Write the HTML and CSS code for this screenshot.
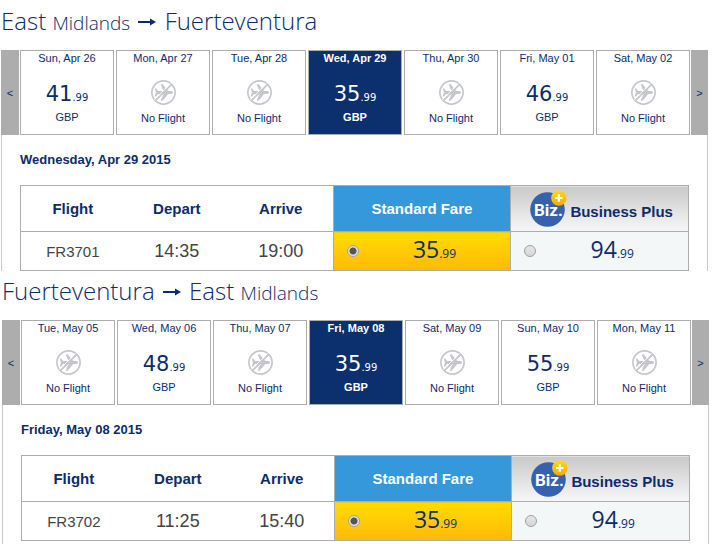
FILE: index.html
```html
<!DOCTYPE html>
<html lang="en">
<head>
  <meta charset="UTF-8" />
  <title>Select flights</title>
  <link rel="stylesheet" href="styles.css">
</head>
<body>
  <svg class="defs" aria-hidden="true">
    <symbol id="no-flight" viewBox="0 0 25 25">
      <circle cx="12.5" cy="12.5" r="11.6" fill="none" stroke="#c6c7ce" stroke-width="1.7"/>
      <path d="M3.800 8.500h1.400l2 2.500h5.300L9.600 4.300h2l5.600 6.700h2.600q2.400.2 2.400 1.500t-2.400 1.500h-2.600l-5.600 6.700h-2L12.500 14H7.200l-2 2.500H3.800l1.100-4z" fill="#c6c7ce"/>
      <path d="M19.800 3.400L3.400 19.800" stroke="#fff" stroke-width="1"/>
      <path d="M20.700 4.300L4.300 20.700" stroke="#c6c7ce" stroke-width="1.700"/>
    </symbol>
    <symbol id="arrow" viewBox="0 0 20 10">
      <path d="M1 5h14" stroke="#0c2c6b" stroke-width="2"/>
      <path d="M13 1.500L19 5l-6 3.500z" fill="#0c2c6b"/>
    </symbol>
    <linearGradient id="gold" x1="0" y1="0" x2="0" y2="1">
      <stop offset="0" stop-color="#ffd91a"/>
      <stop offset="1" stop-color="#f5ab00"/>
    </linearGradient>
  </svg>

  <section class="journey">
    <h2 class="route">East <small>Midlands</small> <svg class="arrow"><use href="#arrow"/></svg> Fuerteventura</h2>
    <div class="days">
      <button class="nav prev">&lt;</button>
      <div class="day-list">
        <button class="day"><span class="date">Sun, Apr 26</span><span class="price">41<small>.99</small></span><span>GBP</span></button>
        <button class="day"><span class="date">Mon, Apr 27</span><svg class="none"><use href="#no-flight"/></svg><span>No Flight</span></button>
        <button class="day"><span class="date">Tue, Apr 28</span><svg class="none"><use href="#no-flight"/></svg><span>No Flight</span></button>
        <button class="day selected"><span class="date">Wed, Apr 29</span><span class="price">35<small>.99</small></span><span>GBP</span></button>
        <button class="day"><span class="date">Thu, Apr 30</span><svg class="none"><use href="#no-flight"/></svg><span>No Flight</span></button>
        <button class="day"><span class="date">Fri, May 01</span><span class="price">46<small>.99</small></span><span>GBP</span></button>
        <button class="day"><span class="date">Sat, May 02</span><svg class="none"><use href="#no-flight"/></svg><span>No Flight</span></button>
      </div>
      <button class="nav next">&gt;</button>
    </div>
    <div class="panel">
      <h3>Wednesday, Apr 29 2015</h3>
      <table class="flights">
        <thead>
          <tr>
            <th>Flight</th>
            <th>Depart</th>
            <th>Arrive</th>
            <th class="fare standard">Standard Fare</th>
            <th class="fare business">
              <div class="plus">
                <svg class="biz" viewBox="0 0 37 37">
                  <circle cx="17.5" cy="19.5" r="17.300" fill="#3561ad"/>
                  <text x="4" y="26" class="biz-text">Biz.</text>
                  <circle cx="28.800" cy="8" r="7.700" fill="url(#gold)"/>
                  <path d="M28.800 4.300v7.400M25.100 8h7.400" stroke="#fff" stroke-width="2.200"/>
                </svg>
                <span>Business Plus</span>
              </div>
            </th>
          </tr>
        </thead>
        <tbody>
          <tr>
            <td class="number">FR3701</td>
            <td>14:35</td>
            <td>19:00</td>
            <td class="standard"><label><input type="radio" name="out" checked><span class="amount">35<small>.99</small></span></label></td>
            <td class="business"><label><input type="radio" name="out"><span class="amount">94<small>.99</small></span></label></td>
          </tr>
        </tbody>
      </table>
    </div>
  </section>

  <section class="journey return">
    <h2 class="route">Fuerteventura <svg class="arrow"><use href="#arrow"/></svg> East <small>Midlands</small></h2>
    <div class="days">
      <button class="nav prev">&lt;</button>
      <div class="day-list">
        <button class="day"><span class="date">Tue, May 05</span><svg class="none"><use href="#no-flight"/></svg><span>No Flight</span></button>
        <button class="day"><span class="date">Wed, May 06</span><span class="price">48<small>.99</small></span><span>GBP</span></button>
        <button class="day"><span class="date">Thu, May 07</span><svg class="none"><use href="#no-flight"/></svg><span>No Flight</span></button>
        <button class="day selected"><span class="date">Fri, May 08</span><span class="price">35<small>.99</small></span><span>GBP</span></button>
        <button class="day"><span class="date">Sat, May 09</span><svg class="none"><use href="#no-flight"/></svg><span>No Flight</span></button>
        <button class="day"><span class="date">Sun, May 10</span><span class="price">55<small>.99</small></span><span>GBP</span></button>
        <button class="day"><span class="date">Mon, May 11</span><svg class="none"><use href="#no-flight"/></svg><span>No Flight</span></button>
      </div>
      <button class="nav next">&gt;</button>
    </div>
    <div class="panel">
      <h3>Friday, May 08 2015</h3>
      <table class="flights">
        <thead>
          <tr>
            <th>Flight</th>
            <th>Depart</th>
            <th>Arrive</th>
            <th class="fare standard">Standard Fare</th>
            <th class="fare business">
              <div class="plus">
                <svg class="biz" viewBox="0 0 37 37">
                  <circle cx="17.5" cy="19.5" r="17.300" fill="#3561ad"/>
                  <text x="4" y="26" class="biz-text">Biz.</text>
                  <circle cx="28.800" cy="8" r="7.700" fill="url(#gold)"/>
                  <path d="M28.800 4.300v7.400M25.100 8h7.400" stroke="#fff" stroke-width="2.200"/>
                </svg>
                <span>Business Plus</span>
              </div>
            </th>
          </tr>
        </thead>
        <tbody>
          <tr>
            <td class="number">FR3702</td>
            <td>11:25</td>
            <td>15:40</td>
            <td class="standard"><label><input type="radio" name="back" checked><span class="amount">35<small>.99</small></span></label></td>
            <td class="business"><label><input type="radio" name="back"><span class="amount">94<small>.99</small></span></label></td>
          </tr>
        </tbody>
      </table>
    </div>
  </section>
</body>
</html>
```
FILE: styles.css
```css
* {
  box-sizing: border-box;
}

body {
  margin: 0;
  padding-top: 1px;
  background: #fff;
  color: #0c2c6b;
  font-family: "Liberation Sans", Arial, sans-serif;
  font-size: 11px;
}

button {
  margin: 0;
  padding: 0;
  font: inherit;
  color: inherit;
  cursor: pointer;
}

.defs {
  position: absolute;
  width: 0;
  height: 0;
}

.journey {
  margin: 0 10px 0 1px;
}

.journey.return {
  margin: 0 9px 0 2px;
}

.route {
  margin: 0;
  height: 49px;
  line-height: 40px;
  font-family: "Open Sans", sans-serif;
  font-size: 24px;
  font-weight: 300;
}

.route small {
  font-size: 19px;
}

.arrow {
  width: 20px;
  height: 10px;
  margin: 0 1px;
  vertical-align: 3px;
}

/* day strip */
.days {
  display: flex;
  gap: 1px;
  height: 85px;
}

.nav {
  flex: none;
  width: 17px;
  border: none;
  background: #adadad;
}

.nav.prev {
  width: 18px;
}

.day-list {
  flex: 1;
  display: grid;
  grid-template-columns: repeat(7, 1fr);
  gap: 2px;
}

.day {
  display: flex;
  flex-direction: column;
  align-items: center;
  background: #fff;
  border: 1px solid #adadad;
  line-height: 14px;
}

.day.selected {
  background: #0c2f6e;
  color: #fff;
  font-weight: bold;
}

.date {
  margin-bottom: 14px;
}

.price {
  height: 31px;
  line-height: 31px;
  font-family: "DejaVu Sans", Verdana, sans-serif;
  font-size: 21px;
  font-weight: normal;
}

.price small {
  font-size: 10px;
}

.none {
  width: 25px;
  height: 25px;
  margin: 1px 0 6px;
}

/* selected day */
.panel {
  padding: 17px 18px 0;
  border: solid #c9c9c9;
  border-width: 0 1px;
}

.return .panel {
  padding-bottom: 3px;
}

.panel h3 {
  margin: 0 0 17px;
  font-size: 13px;
  line-height: 16px;
}

.flights {
  width: 100%;
  table-layout: fixed;
  border-collapse: collapse;
  border: 1px solid #adadad;
}

.flights th,
.flights td {
  padding: 0;
  text-align: center;
}

.flights th {
  height: 46px;
  font-size: 15px;
}

.flights td {
  height: 39px;
  border-top: 1px solid #adadad;
  color: #444;
  font-size: 18px;
}

.flights .number {
  font-size: 15px;
}

.flights .fare {
  width: 26.6%;
}

.flights .standard,
.flights .business {
  border-left: 1px solid #adadad;
}

th.standard {
  background: #3498db;
  color: #fff;
}

th.business {
  background: linear-gradient(#c9c9c9, #f7f7f9);
}

td.standard {
  background: linear-gradient(#ffdc00, #ffb90a);
}

td.business {
  background: #f3f7f8;
}

.plus {
  display: flex;
  justify-content: center;
  align-items: center;
  gap: 3px;
  padding-left: 4px;
}

.plus span {
  padding-top: 6px;
}

.biz {
  width: 37px;
  height: 37px;
}

.biz-text {
  font-family: Roboto, sans-serif;
  font-size: 17px;
  font-weight: bold;
  fill: #fff;
}

label {
  display: flex;
  align-items: center;
  padding-left: 13px;
  color: #0c2c6b;
  cursor: pointer;
}

input {
  appearance: none;
  width: 12px;
  height: 12px;
  margin: 0;
  border: 1px solid #a0a0a0;
  border-radius: 50%;
  background: linear-gradient(#e6e6e6, #d6d6d6);
}

input:checked {
  background: radial-gradient(circle, #555 0 3px, #e4e4e4 4px);
}

.amount {
  flex: 1;
  font-family: "Open Sans", sans-serif;
  font-size: 23px;
  line-height: 30px;
}

.amount small {
  font-size: 12px;
}
```
